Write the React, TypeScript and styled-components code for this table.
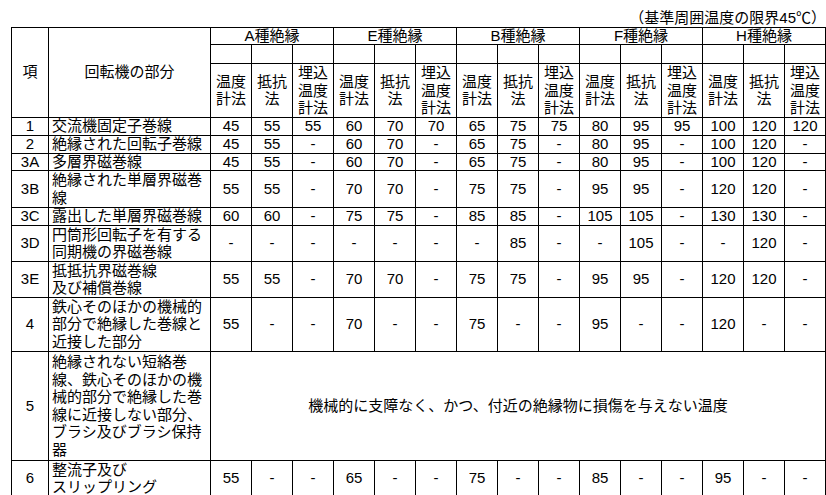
import React from 'react';
import styled, { createGlobalStyle, css } from 'styled-components';

const GlobalStyle = createGlobalStyle`
  body {
    margin: 0;
    background: #ffffff;
    color: #000000;
    font-family: "Liberation Sans", "Noto Sans CJK JP", sans-serif;
  }
`;

const Page = styled.div`
  padding: 8px 1px 0 11px;
`;

const Note = styled.div`
  text-align: right;
  font-size: 15px;
  line-height: 19px;
  margin-right: -1px;
`;

const Table = styled.table`
  border-collapse: collapse;
  table-layout: fixed;
  width: 815px;
  font-size: 15px;
`;

const Row = styled.tr<{ $h: number }>`
  height: ${(p) => p.$h}px;
`;

const cellBase = css`
  border: 1px solid #000000;
  padding: 0 1px;
  line-height: 16px;
  text-align: center;
  vertical-align: middle;
  font-weight: normal;
`;

const HeadCell = styled.th`
  ${cellBase}
`;

const Cell = styled.td`
  ${cellBase}
`;

const PartCell = styled.td`
  ${cellBase}
  text-align: left;
  padding: 0 2px 0 3px;
`;

const Lines = styled.span`
  display: block;
  line-height: 17.5px;
`;

const Line = styled.span`
  display: block;
  white-space: nowrap;
`;

const classes = ['A', 'E', 'B', 'F', 'H'];
const methods = [
  ['温度', '計法'],
  ['抵抗', '法'],
  ['埋込', '温度', '計法'],
];

type Item = {
  no: string;
  part: string[];
  h: number;
  vals?: string[];
};

const v = (s: string) => s.split(' ');

const items: Item[] = [
  { no: '1', part: ['交流機固定子巻線'], h: 18, vals: v('45 55 55 60 70 70 65 75 75 80 95 95 100 120 120') },
  { no: '2', part: ['絶縁された回転子巻線'], h: 18, vals: v('45 55 - 60 70 - 65 75 - 80 95 - 100 120 -') },
  { no: '3A', part: ['多層界磁巻線'], h: 17, vals: v('45 55 - 60 70 - 65 75 - 80 95 - 100 120 -') },
  { no: '3B', part: ['絶縁された単層界磁巻', '線'], h: 37, vals: v('55 55 - 70 70 - 75 75 - 95 95 - 120 120 -') },
  { no: '3C', part: ['露出した単層界磁巻線'], h: 18, vals: v('60 60 - 75 75 - 85 85 - 105 105 - 130 130 -') },
  { no: '3D', part: ['円筒形回転子を有する', '同期機の界磁巻線'], h: 36, vals: v('- - - - - - - 85 - - 105 - - 120 -') },
  { no: '3E', part: ['抵抵抗界磁巻線', '及び補償巻線'], h: 36, vals: v('55 55 - 70 70 - 75 75 - 95 95 - 120 120 -') },
  { no: '4', part: ['鉄心そのほかの機械的', '部分で絶縁した巻線と', '近接した部分'], h: 54, vals: v('55 - - 70 - - 75 - - 95 - - 120 - -') },
  {
    no: '5',
    part: ['絶縁されない短絡巻', '線、鉄心そのほかの機', '械的部分で絶縁した巻', '線に近接しない部分、', 'ブラシ及びブラシ保持', '器'],
    h: 109,
  },
  { no: '6', part: ['整流子及び', 'スリップリング'], h: 35, vals: v('55 - - 65 - - 75 - - 85 - - 95 - -') },
];

const MultiLine: React.FC<{ lines: string[] }> = ({ lines }) =>
  lines.length === 1 ? (
    <>{lines[0]}</>
  ) : (
    <Lines>
      {lines.map((l, i) => (
        <Line key={i}>{l}</Line>
      ))}
    </Lines>
  );

const App: React.FC = () => {
  return (
    <Page>
      <GlobalStyle />
      <Note>（基準周囲温度の限界45℃）</Note>
      <Table>
        <colgroup>
          <col style={{ width: 37 }} />
          <col style={{ width: 162 }} />
          {Array.from({ length: 15 }).map((_, i) => (
            <col key={i} style={{ width: 41 }} />
          ))}
        </colgroup>
        <thead>
          <Row $h={17}>
            <HeadCell rowSpan={3}>項</HeadCell>
            <HeadCell rowSpan={3}>回転機の部分</HeadCell>
            {classes.map((c) => (
              <HeadCell key={c} colSpan={3}>
                {c}種絶縁
              </HeadCell>
            ))}
          </Row>
          <Row $h={19}>
            {Array.from({ length: 15 }).map((_, i) => (
              <HeadCell key={i} />
            ))}
          </Row>
          <Row $h={53}>
            {classes.map((c) =>
              methods.map((m, i) => (
                <HeadCell key={c + i}>
                  <MultiLine lines={m} />
                </HeadCell>
              ))
            )}
          </Row>
        </thead>
        <tbody>
          {items.map((it) => (
            <Row key={it.no} $h={it.h}>
              <Cell>{it.no}</Cell>
              <PartCell>
                <MultiLine lines={it.part} />
              </PartCell>
              {it.vals ? (
                it.vals.map((x, i) => <Cell key={i}>{x}</Cell>)
              ) : (
                <Cell colSpan={15}>機械的に支障なく、かつ、付近の絶縁物に損傷を与えない温度</Cell>
              )}
            </Row>
          ))}
        </tbody>
      </Table>
    </Page>
  );
};

export default App;
